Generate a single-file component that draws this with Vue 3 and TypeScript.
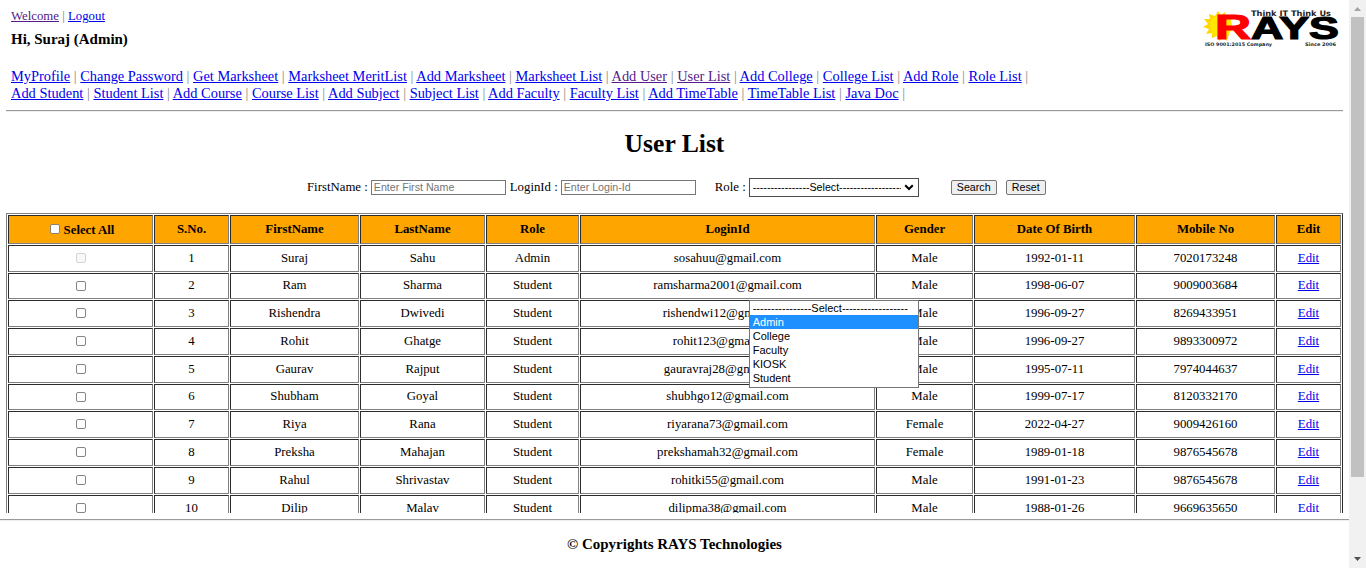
<script setup lang="ts">
import { ref } from 'vue'

interface NavLink { label: string; visited?: boolean }
interface User {
  first: string; last: string; role: string; login: string
  gender: string; dob: string; mobile: string
}

const link = (label: string, visited = false): NavLink => ({ label, visited })

const navRows: NavLink[][] = [
  [
    link('MyProfile'), link('Change Password'), link('Get Marksheet'), link('Marksheet MeritList'),
    link('Add Marksheet'), link('Marksheet List'), link('Add User', true), link('User List', true),
    link('Add College'), link('College List'), link('Add Role'), link('Role List'),
  ],
  [
    link('Add Student'), link('Student List'), link('Add Course'), link('Course List'),
    link('Add Subject'), link('Subject List'), link('Add Faculty'), link('Faculty List'),
    link('Add TimeTable'), link('TimeTable List'), link('Java Doc'),
  ],
]

const headers = ['S.No.', 'FirstName', 'LastName', 'Role', 'LoginId', 'Gender', 'Date Of Birth', 'Mobile No', 'Edit']

const user = (first: string, last: string, role: string, login: string, gender: string, dob: string, mobile: string): User =>
  ({ first, last, role, login, gender, dob, mobile })

const users: User[] = [
  user('Suraj', 'Sahu', 'Admin', 'sosahuu@gmail.com', 'Male', '1992-01-11', '7020173248'),
  user('Ram', 'Sharma', 'Student', 'ramsharma2001@gmail.com', 'Male', '1998-06-07', '9009003684'),
  user('Rishendra', 'Dwivedi', 'Student', 'rishendwi12@gmail.com', 'Male', '1996-09-27', '8269433951'),
  user('Rohit', 'Ghatge', 'Student', 'rohit123@gmail.com', 'Male', '1996-09-27', '9893300972'),
  user('Gaurav', 'Rajput', 'Student', 'gauravraj28@gmail.com', 'Male', '1995-07-11', '7974044637'),
  user('Shubham', 'Goyal', 'Student', 'shubhgo12@gmail.com', 'Male', '1999-07-17', '8120332170'),
  user('Riya', 'Rana', 'Student', 'riyarana73@gmail.com', 'Female', '2022-04-27', '9009426160'),
  user('Preksha', 'Mahajan', 'Student', 'prekshamah32@gmail.com', 'Female', '1989-01-18', '9876545678'),
  user('Rahul', 'Shrivastav', 'Student', 'rohitki55@gmail.com', 'Male', '1991-01-23', '9876545678'),
  user('Dilip', 'Malav', 'Student', 'dilipma38@gmail.com', 'Male', '1988-01-26', '9669635650'),
]

const placeholder = '-'.repeat(16) + 'Select' + '-'.repeat(18)
const roles = [placeholder, 'Admin', 'College', 'Faculty', 'KIOSK', 'Student']
const active = ref('Admin')
</script>

<template>
  <div class="screen">
    <main class="page">
      <header class="head">
        <div class="who">
          <div class="session"><a class="visited" href="#">Welcome</a> | <a href="#">Logout</a></div>
          <h3>Hi, Suraj (Admin)</h3>
        </div>
        <svg class="logo" width="142" height="44" viewBox="0 0 142 44">
          <path
            fill="#ffd800"
            d="M17 7 L20 11 L24 8 L25 13 L30 13 L28 30 L26 37 L22 33 L18 37 L16 32 L11 34 L11 29 L5 30 L8 25 L2 23 L7 20 L3 15 L9 15 L8 10 L14 12 Z"
          />
          <circle cx="20" cy="22" r="11" fill="#ffe800" />
          <text class="mark" x="14" y="34.5" font-size="35.5" textLength="36" lengthAdjust="spacingAndGlyphs" fill="#f00" stroke="#f00">R</text>
          <text class="mark" x="50" y="34.5" font-size="30.5" textLength="88" lengthAdjust="spacingAndGlyphs" fill="#000" stroke="#000">AYS</text>
          <text class="tag" x="50" y="12" font-size="7.6" textLength="80" lengthAdjust="spacingAndGlyphs">Think IT Think Us</text>
          <text class="tag" x="4" y="41.5" font-size="4.8" textLength="67" lengthAdjust="spacingAndGlyphs">ISO 9001:2015 Company</text>
          <text class="tag" x="104" y="41.5" font-size="4.8" textLength="31" lengthAdjust="spacingAndGlyphs">Since 2006</text>
        </svg>
      </header>

      <nav class="nav">
        <div v-for="(row, i) in navRows" :key="i">
          <template v-for="item in row" :key="item.label"><a href="#" :class="{ visited: item.visited }">{{ item.label }}</a><span class="bar"> | </span></template>
        </div>
      </nav>
      <div class="rule top-rule"></div>

      <h1>User List</h1>

      <form class="search" @submit.prevent>
        <label>FirstName :</label>
        <input class="field first" type="text" placeholder="Enter First Name">
        <label>LoginId :</label>
        <input class="field" type="text" placeholder="Enter Login-Id">
        <label class="role-label">Role :</label>
        <div class="select">
          <span class="value">{{ placeholder }}</span>
          <svg width="10" height="7" viewBox="0 0 10 7"><path d="M1.2 1.2 L5 5 L8.8 1.2" fill="none" stroke="#000" stroke-width="2" /></svg>
          <ul class="menu">
            <li v-for="r in roles" :key="r" :class="{ on: r === active }">{{ r }}</li>
          </ul>
        </div>
        <button class="go">Search</button>
        <button class="reset">Reset</button>
      </form>

      <div class="clip">
        <table>
          <colgroup>
            <col class="c-all"><col class="c-no"><col class="c-first"><col class="c-last"><col class="c-role">
            <col class="c-login"><col class="c-gender"><col class="c-dob"><col class="c-mobile"><col class="c-edit">
          </colgroup>
          <thead>
            <tr>
              <th><div class="all"><i class="box plain"></i>Select All</div></th>
              <th v-for="h in headers" :key="h">{{ h }}</th>
            </tr>
          </thead>
          <tbody>
            <tr v-for="(u, i) in users" :key="u.login" :class="{ short: i === 1 || i === 5 }">
              <td class="pick"><i class="box" :class="{ off: i === 0 }"></i></td>
              <td>{{ i + 1 }}</td>
              <td>{{ u.first }}</td>
              <td>{{ u.last }}</td>
              <td>{{ u.role }}</td>
              <td>{{ u.login }}</td>
              <td>{{ u.gender }}</td>
              <td>{{ u.dob }}</td>
              <td>{{ u.mobile }}</td>
              <td><a href="#">Edit</a></td>
            </tr>
          </tbody>
        </table>
      </div>

      <footer>
        <div class="rule"></div>
        <h3>© Copyrights RAYS Technologies</h3>
      </footer>
    </main>

    <aside class="scroll">
      <svg width="17" height="17" viewBox="0 0 17 17"><path d="M5 11 L8.5 7 L12 11 Z" fill="#a3a3a3" /></svg>
      <div class="thumb"></div>
      <svg class="down" width="17" height="17" viewBox="0 0 17 17"><path d="M5 6 L12 6 L8.5 10 Z" fill="#505050" /></svg>
    </aside>
  </div>
</template>

<style>
html, body { margin: 0; overflow: hidden; background: #fff; }
</style>

<style scoped>
.screen {
  display: flex;
  width: 1366px;
  height: 568px;
  overflow: hidden;
  font: 12.8px/15px "Liberation Serif", "Times New Roman", serif;
  color: #000;
}
.page { width: 1349px; height: 568px; overflow: hidden; }
a { color: #0000ee; text-decoration: underline; }
a.visited { color: #551a8b; }
h1, h3 { margin: 0; font-weight: bold; }
h3 { font-size: 14.98px; line-height: 17px; }

.head { display: flex; justify-content: space-between; height: 68px; padding: 0 6px 0 11px; }
.session { padding-top: 9px; color: #777; }
.who h3 { margin-top: 7px; }
.logo { margin-top: 4px; }
.mark { font-family: "Liberation Sans", Arial, sans-serif; font-weight: bold; stroke-width: 1.2; }
.tag { font-family: "DejaVu Sans", sans-serif; font-weight: bold; fill: #222; }

.nav { height: 42px; padding-left: 11px; font-size: 14.4px; line-height: 17px; white-space: pre; }
.bar { color: #888; }
.rule { height: 1px; border-top: 1px solid #9a9a9a; background: #eee; }
.top-rule { margin: 0 6px; }

h1 { margin-top: 17px; text-align: center; font-size: 25.6px; line-height: 30px; }

.search { display: flex; align-items: center; height: 19px; margin: 19px 0 16px 307px; }
.field {
  box-sizing: border-box;
  width: 135px;
  height: 15px;
  margin: 0 0 0 3px;
  padding: 0 2px 1px;
  border: 1px solid #767676;
  font: 10.67px/12px "Liberation Sans", Arial, sans-serif;
}
.field::placeholder { color: #757575; opacity: 1; }
.first { margin-right: 4px; }
.role-label { margin-left: 19px; }
.select {
  position: relative;
  display: flex;
  align-items: center;
  box-sizing: border-box;
  width: 170px;
  height: 19px;
  margin-left: 3px;
  padding: 0 4px 0 3px;
  border: 1px solid #4c4c4c;
  font: 10.67px/13px "Liberation Sans", Arial, sans-serif;
}
.value { flex: 1; margin-right: 3px; overflow: hidden; white-space: nowrap; }
.menu {
  position: absolute;
  z-index: 2;
  left: -1px;
  top: 121px;
  box-sizing: border-box;
  width: 170px;
  height: 88px;
  margin: 0;
  padding: 0;
  border: 1px solid #767676;
  background: #fff;
  list-style: none;
  font-size: 11px;
  line-height: 14px;
}
.menu li { height: 14px; padding-left: 3px; overflow: hidden; white-space: nowrap; }
.menu .on { background: #1e90ff; color: #fff; }
button {
  box-sizing: border-box;
  height: 15px;
  padding: 0;
  border: 1px solid #767676;
  border-radius: 2px;
  background: #efefef;
  color: #000;
  font: 10.67px/13px "Liberation Sans", Arial, sans-serif;
}
.go { width: 46px; margin-left: 32px; }
.reset { width: 40px; margin-left: 9px; }

.clip { height: 300px; margin-left: 6px; overflow: hidden; }
table {
  width: 1337px;
  border: 1px outset #808080;
  border-collapse: separate;
  border-spacing: 1px;
  table-layout: fixed;
}
.c-all { width: 145px; }
.c-no { width: 75px; }
.c-first { width: 129px; }
.c-last { width: 125px; }
.c-role { width: 93px; }
.c-login { width: 295px; }
.c-gender { width: 97px; }
.c-dob { width: 161px; }
.c-mobile { width: 139px; }
.c-edit { width: 65px; }
th, td {
  box-sizing: border-box;
  height: 27px;
  padding: 0;
  border: 1px inset #808080;
  text-align: center;
  vertical-align: middle;
}
th { height: 29px; background: orange; }
td.pick { padding-bottom: 2px; }
.short td { height: 26px; padding-bottom: 1px; }
.all { display: flex; align-items: center; justify-content: center; gap: 4px; padding: 1px 0 0 3px; }
.box {
  display: block;
  box-sizing: border-box;
  width: 10px;
  height: 10px;
  margin: 0 auto;
  border: 1px solid #858585;
  border-radius: 2px;
  background: #fff;
}
.all .box { margin: -2px 0 0; }
.plain { border-color: #8b8373; }
.off { border-color: #d4d4d4; background: #f8f8f8; }

footer { padding-top: 6px; text-align: center; }
footer h3 { margin-top: 15px; }

.scroll { display: flex; flex-direction: column; width: 17px; height: 568px; background: #f1f1f1; }
.thumb { width: 13px; height: 460px; margin-left: 2px; background: #c1c1c1; }
.down { margin-top: auto; }
</style>
